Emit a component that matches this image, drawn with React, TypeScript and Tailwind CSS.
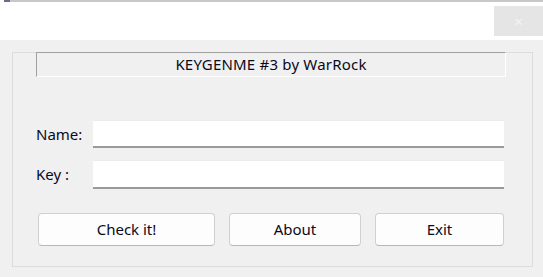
export default function App() {
  const font = { fontFamily: '"Noto Sans", "Open Sans", sans-serif' };
  return (
    <div className="w-[543px] h-[277px] bg-[#f0f0f0] overflow-hidden text-[15px] text-[#0a0a1a]" style={font}>
      {/* window edge */}
      <div className="h-[2px] bg-white flex">
        <div className="w-[4px] bg-white" />
        <div className="w-[6px] bg-[#6b6b8a]" />
        <div className="flex-1 bg-[#c8c8c8]" />
      </div>

      {/* title bar */}
      <div className="h-[38px] bg-white flex justify-end items-start">
        <div className="mt-[4px] w-[49px] h-[30px] bg-[#e5e5e5] flex items-center justify-center text-[#f4f4f4] text-[15px]">
          ×
        </div>
      </div>

      {/* body */}
      <div className="pt-[12px] pl-[12px]">
        <div className="w-[521px] h-[215px] border border-[#dcdcdc] flex flex-col">
          <div className="-mt-[1px] ml-[23px] w-[470px] h-[25px] border-t border-l border-t-[#a0a0a0] border-l-[#a0a0a0] border-b border-r border-b-white border-r-white flex items-center justify-center tracking-[0.2px]">
            KEYGENME #3 by WarRock
          </div>

          <div className="mt-[43px] ml-[23px] flex items-center">
            <span className="w-[57px]">Name:</span>
            <div className="w-[411px] h-[28px] bg-white border-t border-t-[#ececec] border-b-2 border-b-[#9a9a9a]" />
          </div>
          <div className="mt-[12px] ml-[23px] flex items-center">
            <span className="w-[57px]">Key :</span>
            <div className="w-[411px] h-[29px] bg-white border-t border-t-[#ececec] border-b-2 border-b-[#9a9a9a]" />
          </div>

          <div className="mt-[24px] ml-[25px] flex gap-[14px]">
            <button className="w-[177px] h-[33px] bg-[#fdfdfd] border border-[#d0d0d0] border-b-[#b8b8b8] rounded-[4px]">
              Check it!
            </button>
            <button className="w-[132px] h-[33px] bg-[#fdfdfd] border border-[#d0d0d0] border-b-[#b8b8b8] rounded-[4px]">
              About
            </button>
            <button className="w-[129px] h-[33px] bg-[#fdfdfd] border border-[#d0d0d0] border-b-[#b8b8b8] rounded-[4px]">
              Exit
            </button>
          </div>
        </div>
      </div>
    </div>
  );
}
